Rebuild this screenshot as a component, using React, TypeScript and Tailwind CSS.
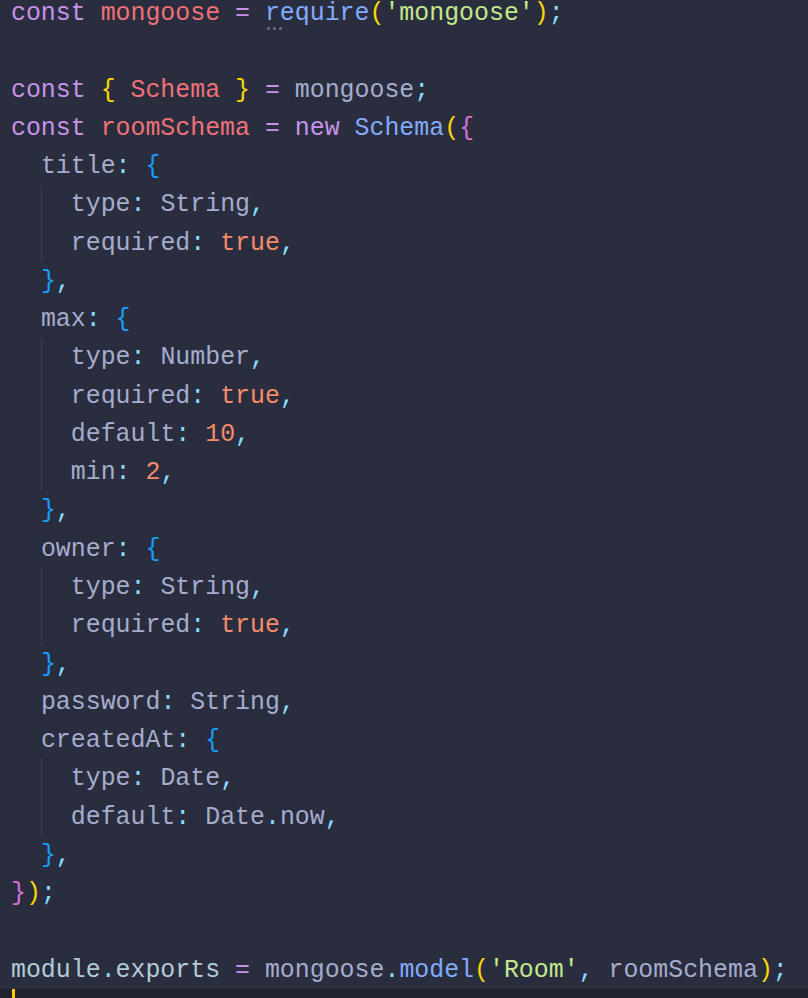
const C = {
  kw: "text-[#c792ea]",
  vr: "text-[#f07178]",
  fn: "text-[#82aaff]",
  str: "text-[#c3e88d]",
  num: "text-[#f78c6c]",
  pn: "text-[#89ddff]",
  tx: "text-[#a6accd]",
  md: "text-[#b2ccd6]",
  y: "text-[#ffd700]",
  p: "text-[#da70d6]",
  b: "text-[#179fff]",
};

type Tok = [string, string];
type Line = { indent: number; toks: Tok[]; dots?: boolean };

const lines: Line[] = [
  {
    indent: 0,
    dots: true,
    toks: [
      ["const ", C.kw],
      ["mongoose ", C.vr],
      ["= ", C.kw],
      ["require", C.fn],
      ["(", C.y],
      ["'mongoose'", C.str],
      [")", C.y],
      [";", C.pn],
    ],
  },
  { indent: 0, toks: [] },
  {
    indent: 0,
    toks: [
      ["const ", C.kw],
      ["{ ", C.y],
      ["Schema ", C.vr],
      ["} ", C.y],
      ["= ", C.kw],
      ["mongoose", C.tx],
      [";", C.pn],
    ],
  },
  {
    indent: 0,
    toks: [
      ["const ", C.kw],
      ["roomSchema ", C.vr],
      ["= ", C.kw],
      ["new ", C.kw],
      ["Schema", C.fn],
      ["(", C.y],
      ["{", C.p],
    ],
  },
  { indent: 1, toks: [["title", C.tx], [": ", C.pn], ["{", C.b]] },
  { indent: 2, toks: [["type", C.tx], [": ", C.pn], ["String", C.tx], [",", C.pn]] },
  { indent: 2, toks: [["required", C.tx], [": ", C.pn], ["true", C.num], [",", C.pn]] },
  { indent: 1, toks: [["}", C.b], [",", C.pn]] },
  { indent: 1, toks: [["max", C.tx], [": ", C.pn], ["{", C.b]] },
  { indent: 2, toks: [["type", C.tx], [": ", C.pn], ["Number", C.tx], [",", C.pn]] },
  { indent: 2, toks: [["required", C.tx], [": ", C.pn], ["true", C.num], [",", C.pn]] },
  { indent: 2, toks: [["default", C.tx], [": ", C.pn], ["10", C.num], [",", C.pn]] },
  { indent: 2, toks: [["min", C.tx], [": ", C.pn], ["2", C.num], [",", C.pn]] },
  { indent: 1, toks: [["}", C.b], [",", C.pn]] },
  { indent: 1, toks: [["owner", C.tx], [": ", C.pn], ["{", C.b]] },
  { indent: 2, toks: [["type", C.tx], [": ", C.pn], ["String", C.tx], [",", C.pn]] },
  { indent: 2, toks: [["required", C.tx], [": ", C.pn], ["true", C.num], [",", C.pn]] },
  { indent: 1, toks: [["}", C.b], [",", C.pn]] },
  { indent: 1, toks: [["password", C.tx], [": ", C.pn], ["String", C.tx], [",", C.pn]] },
  { indent: 1, toks: [["createdAt", C.tx], [": ", C.pn], ["{", C.b]] },
  { indent: 2, toks: [["type", C.tx], [": ", C.pn], ["Date", C.tx], [",", C.pn]] },
  {
    indent: 2,
    toks: [["default", C.tx], [": ", C.pn], ["Date", C.tx], [".", C.pn], ["now", C.tx], [",", C.pn]],
  },
  { indent: 1, toks: [["}", C.b], [",", C.pn]] },
  { indent: 0, toks: [["}", C.p], [")", C.y], [";", C.pn]] },
  { indent: 0, toks: [] },
  {
    indent: 0,
    toks: [
      ["module", C.md],
      [".", C.pn],
      ["exports ", C.md],
      ["= ", C.kw],
      ["mongoose", C.tx],
      [".", C.pn],
      ["model", C.fn],
      ["(", C.y],
      ["'Room'", C.str],
      [", ", C.pn],
      ["roomSchema", C.tx],
      [")", C.y],
      [";", C.pn],
    ],
  },
];

function CodeLine({ line }: { line: Line }) {
  return (
    <div className="flex h-[38.28px] items-center whitespace-pre">
      {line.indent >= 1 && <span className="w-[29.9px] h-full" />}
      {line.indent >= 2 && <span className="w-[29.9px] h-full border-l border-[#3b3f56]" />}
      {line.toks.map(([t, c], i) => (
        <span key={i} className={`${c} relative`}>
          {t}
          {line.dots && t === "require" && (
            <span className="absolute left-[2px] top-[33px] flex gap-[3px]">
              <span className="w-[3px] h-[3px] rounded-full bg-[#6c7089]" />
              <span className="w-[3px] h-[3px] rounded-full bg-[#6c7089]" />
              <span className="w-[3px] h-[3px] rounded-full bg-[#6c7089]" />
            </span>
          )}
        </span>
      ))}
    </div>
  );
}

export default function App() {
  return (
    <div className="w-[808px] h-[998px] overflow-hidden bg-[#292d3e] flex flex-col">
      <div
        className="mt-[-6px] pl-[11px] text-[24.9px] leading-[38.28px]"
        style={{ fontFamily: '"Liberation Mono", monospace' }}
      >
        {lines.map((l, i) => (
          <CodeLine key={i} line={l} />
        ))}
      </div>
      <div className="flex-1 bg-[#20222e] pl-[12px]">
        <div className="w-[3px] h-full bg-[#ffcc00]" />
      </div>
    </div>
  );
}
